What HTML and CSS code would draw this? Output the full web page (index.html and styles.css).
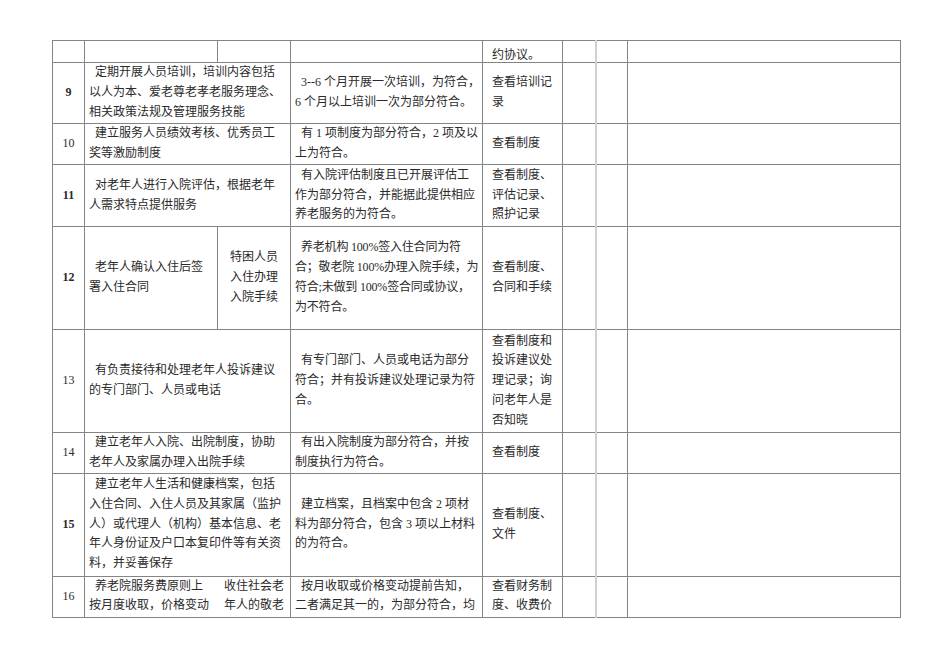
FILE: index.html
```html
<!DOCTYPE html>
<html lang="zh">
<head>
<meta charset="utf-8">
<title>养老机构服务质量检查表</title>
<link rel="stylesheet" href="styles.css">
</head>
<body>
<div class="page">
<table class="grid">
  <colgroup>
    <col class="c-no">
    <col class="c-item">
    <col class="c-sub">
    <col class="c-std">
    <col class="c-way">
    <col class="c-a">
    <col class="c-b">
    <col class="c-note">
  </colgroup>
  <tbody>
    <tr class="h22">
      <td></td><td></td><td></td><td></td>
      <td class="way bottom">约协议。</td>
      <td></td><td class="lt"></td><td></td>
    </tr>
    <tr class="h61">
      <td class="no bold">9</td>
      <td colspan="2" class="txt ind">定期开展人员培训，培训内容包括<br>以人为本、爱老尊老孝老服务理念、<br>相关政策法规及管理服务技能</td>
      <td class="txt ind">3--6 个月开展一次培训，为符合，<br>6 个月以上培训一次为部分符合。</td>
      <td class="way">查看培训记<br>录</td>
      <td></td><td class="lt"></td><td></td>
    </tr>
    <tr class="h41">
      <td class="no">10</td>
      <td colspan="2" class="txt ind">建立服务人员绩效考核、优秀员工<br>奖等激励制度</td>
      <td class="txt ind">有 1 项制度为部分符合，2 项及以<br>上为符合。</td>
      <td class="way">查看制度</td>
      <td></td><td class="lt"></td><td></td>
    </tr>
    <tr class="h62">
      <td class="no bold">11</td>
      <td colspan="2" class="txt ind">对老年人进行入院评估，根据老年<br>人需求特点提供服务</td>
      <td class="txt ind">有入院评估制度且已开展评估工<br>作为部分符合，并能据此提供相应<br>养老服务的为符合。</td>
      <td class="way">查看制度、<br>评估记录、<br>照护记录</td>
      <td></td><td class="lt"></td><td></td>
    </tr>
    <tr class="h103">
      <td class="no bold">12</td>
      <td class="txt ind">老年人确认入住后签<br>署入住合同</td>
      <td class="sub">特困人员<br>入住办理<br>入院手续</td>
      <td class="txt ind tight">养老机构 100%签入住合同为符<br>合；敬老院 100%办理入院手续，为<br>符合;未做到 100%签合同或协议，<br>为不符合。</td>
      <td class="way">查看制度、<br>合同和手续</td>
      <td></td><td class="lt"></td><td></td>
    </tr>
    <tr class="h103">
      <td class="no">13</td>
      <td colspan="2" class="txt ind">有负责接待和处理老年人投诉建议<br>的专门部门、人员或电话</td>
      <td class="txt ind">有专门部门、人员或电话为部分<br>符合；并有投诉建议处理记录为符<br>合。</td>
      <td class="way">查看制度和<br>投诉建议处<br>理记录；询<br>问老年人是<br>否知晓</td>
      <td></td><td class="lt"></td><td></td>
    </tr>
    <tr class="h40">
      <td class="no">14</td>
      <td colspan="2" class="txt ind">建立老年人入院、出院制度，协助<br>老年人及家属办理入出院手续</td>
      <td class="txt ind">有出入院制度为部分符合，并按<br>制度执行为符合。</td>
      <td class="way">查看制度</td>
      <td></td><td class="lt"></td><td></td>
    </tr>
    <tr class="h103">
      <td class="no bold">15</td>
      <td colspan="2" class="txt ind">建立老年人生活和健康档案，包括<br>入住合同、入住人员及其家属（监护<br>人）或代理人（机构）基本信息、老<br>年人身份证及户口本复印件等有关资<br>料，并妥善保存</td>
      <td class="txt ind">建立档案，且档案中包含 2 项材<br>料为部分符合，包含 3 项以上材料<br>的为符合。</td>
      <td class="way">查看制度、<br>文件</td>
      <td></td><td class="lt"></td><td></td>
    </tr>
    <tr class="h41">
      <td class="no">16</td>
      <td colspan="2" class="split">
        <div class="split-row">
          <div class="split-l ind">养老院服务费原则上<br>按月度收取，价格变动</div>
          <div class="split-r">收住社会老<br>年人的敬老</div>
        </div>
      </td>
      <td class="txt ind top">按月收取或价格变动提前告知，<br>二者满足其一的，为部分符合，均</td>
      <td class="way top">查看财务制<br>度、收费价</td>
      <td></td><td class="lt"></td><td></td>
    </tr>
  </tbody>
</table>
</div>
</body>
</html>
```

FILE: styles.css
```css
html, body {
  margin: 0;
  padding: 0;
  background: #ffffff;
}

.page {
  padding: 40px 0 0 52px;
}

.grid {
  border-collapse: collapse;
  table-layout: fixed;
  width: 848px;
  font-family: "Liberation Serif", "Noto Sans CJK SC", serif;
  font-size: 12px;
  line-height: 19.8px;
  color: #2a2a2a;
}

.c-no { width: 32px; }
.c-item { width: 133px; }
.c-sub { width: 73px; }
.c-std { width: 192px; }
.c-way { width: 80px; }
.c-a { width: 33px; }
.c-b { width: 32px; }
.c-note { width: 273px; }

.grid td {
  border: 1px solid #858585;
  padding: 0 2px 0 4px;
  vertical-align: middle;
  white-space: nowrap;
  overflow: hidden;
}

.grid td.lt {
  border-left: 2px solid #d0d0d0;
}

.h22 { height: 22px; }
.h40 { height: 40px; }
.h41 { height: 41px; }
.h61 { height: 61px; }
.h62 { height: 62px; }
.h103 { height: 103px; }

.grid td.no {
  text-align: center;
  padding: 0;
}

.bold {
  font-weight: bold;
}

.ind {
  text-indent: 6px;
}

.tight {
  letter-spacing: -0.2px;
}

.grid td.way {
  padding-left: 9px;
  padding-right: 0;
}

.grid td.bottom {
  vertical-align: bottom;
  line-height: 14px;
}

.grid td.top {
  vertical-align: top;
}

.grid td.sub {
  text-align: center;
  padding: 0;
}

.grid td.split {
  padding: 0 0 0 4px;
  vertical-align: top;
}

.split-row {
  display: flex;
}

.split-l {
  width: 135px;
  flex: none;
}

.split-r {
  width: 66px;
  flex: none;
}
```
